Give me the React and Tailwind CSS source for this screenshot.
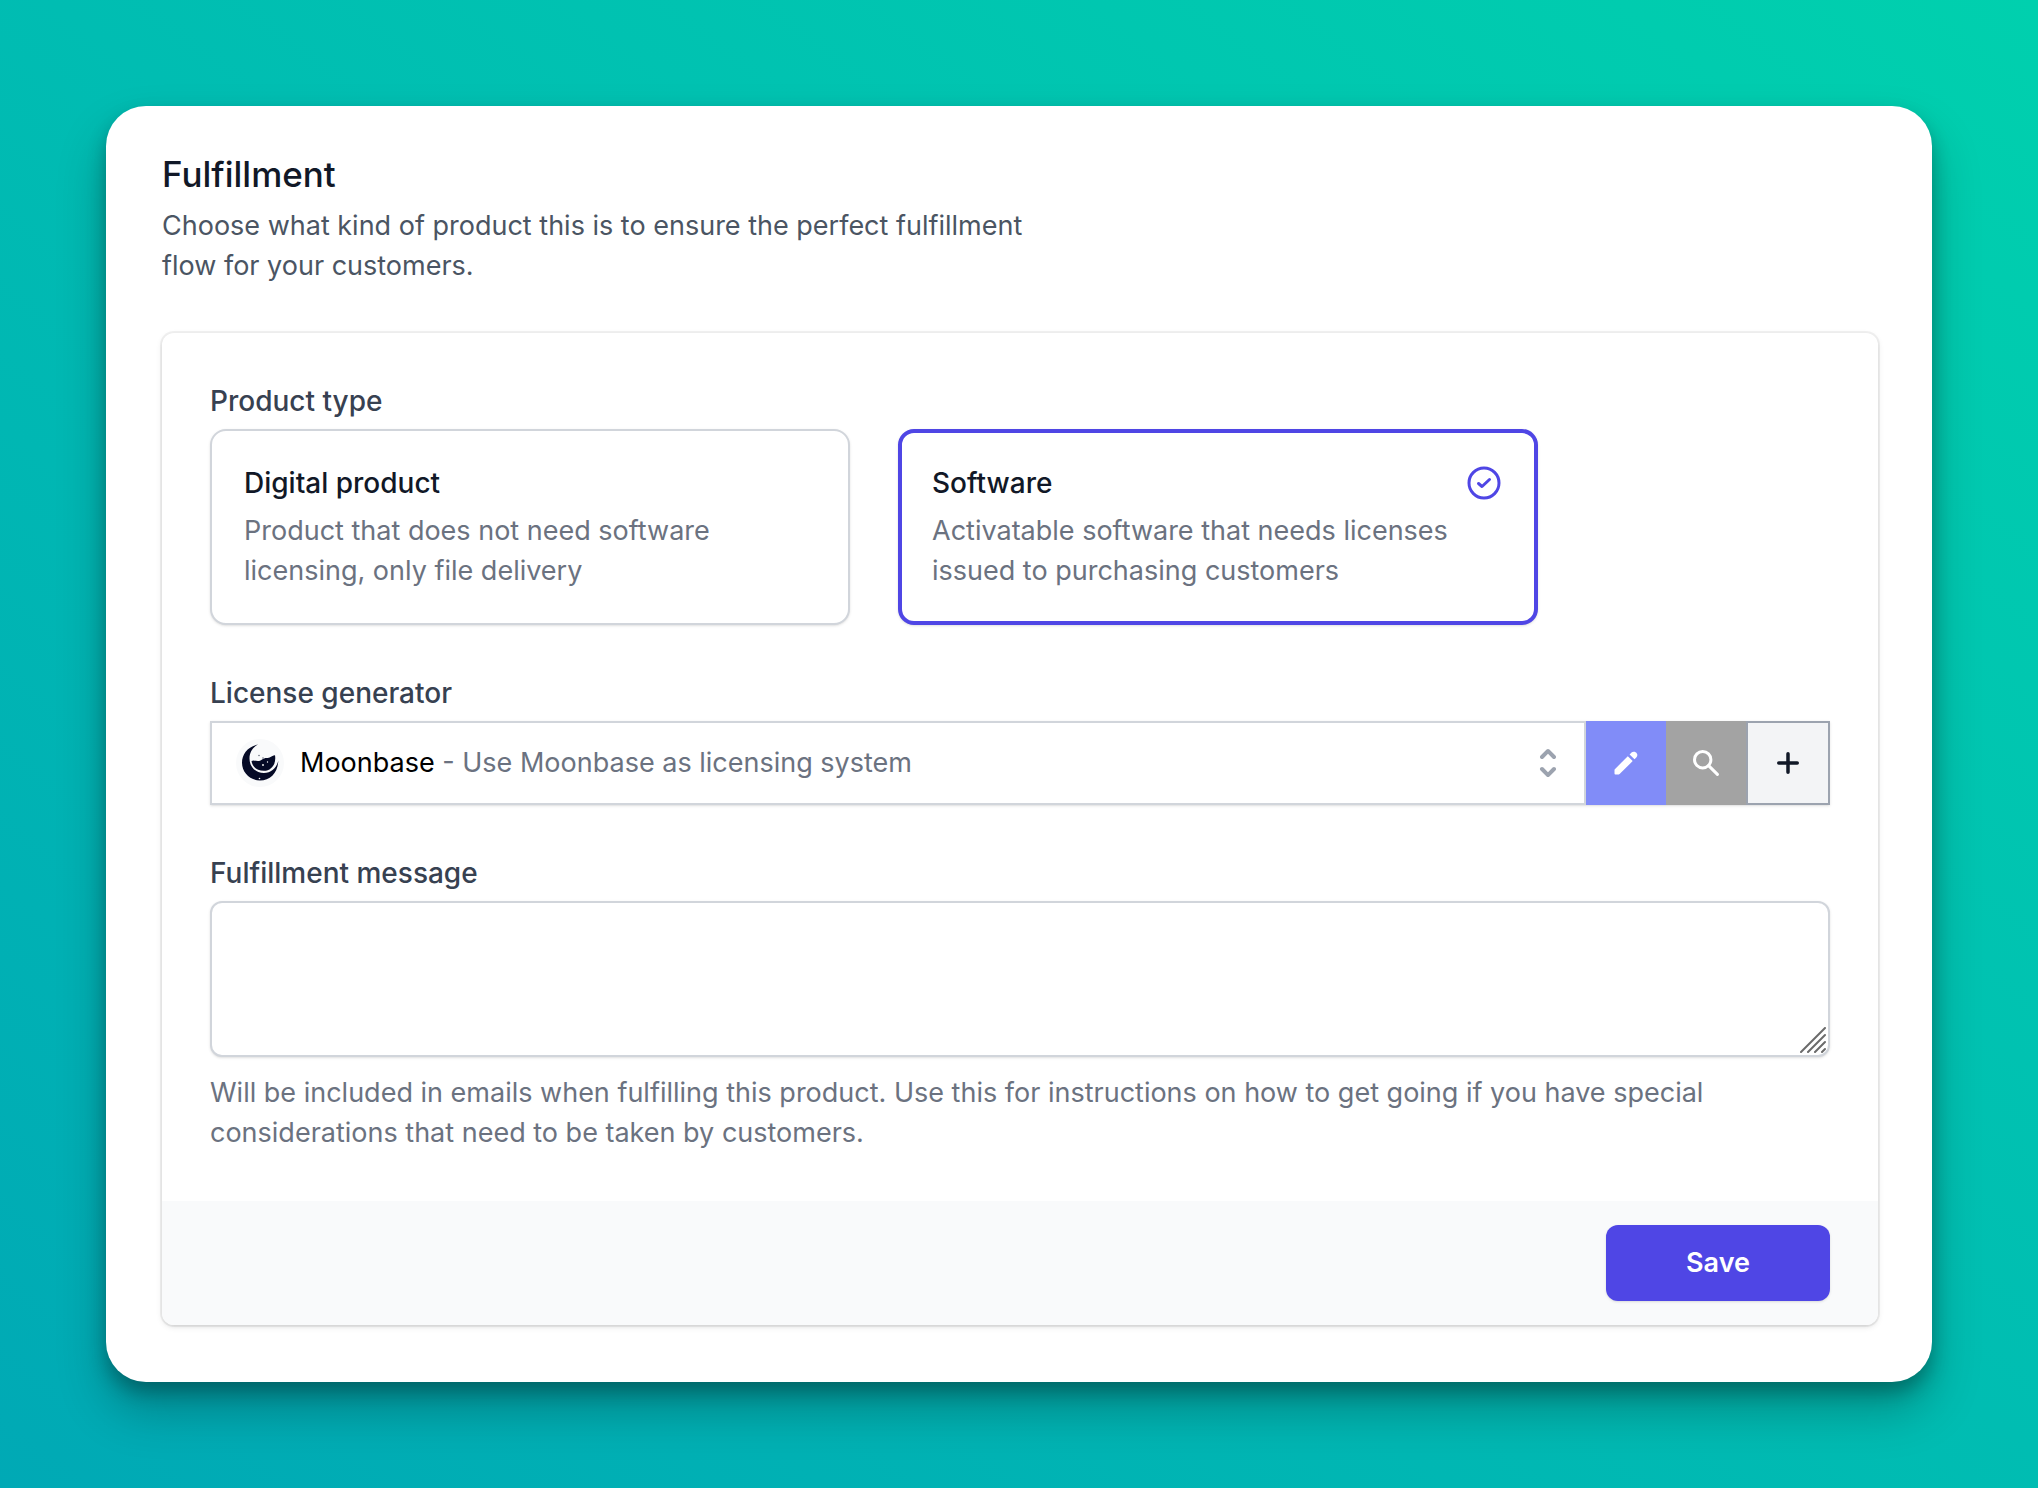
import { useState } from "react";

const TYPES = [
  { id: "digital", title: "Digital product", text: "Product that does not need software licensing, only file delivery" },
  { id: "software", title: "Software", text: "Activatable software that needs licenses issued to purchasing customers" },
];

function CheckCircle() {
  return (
    <svg viewBox="0 0 40 40" className="size-10 shrink-0 text-[#4f46e5]" fill="none" stroke="currentColor" strokeWidth="3" strokeLinecap="round" strokeLinejoin="round" aria-hidden="true">
      <circle cx="20" cy="20" r="15" />
      <path d="M14.500 20.500 18 23.500 25.500 16.500" />
    </svg>
  );
}

function MoonLogo() {
  return (
    <svg viewBox="0 0 48 48" className="size-12 shrink-0" aria-hidden="true">
      <circle cx="24" cy="24" r="24" fill="#f9fafb" />
      <path d="M22 5.500C12 7.500 6 15 6 23.800 6 33.500 14 41.500 24 41.500 34 41.500 41.500 34.500 42.300 22 40 29.500 35 34 28 34 19 34 13.500 27.500 13.500 19.500 13.500 13.500 16.500 8.500 22 5.500z" fill="#050a26" />
      <path d="M15.500 22C18 20.500 20 22.500 23 22 26 21.500 27 19 30.500 19 34 19 35 17 39 16.200 40.500 25 35.500 31.800 28 31.800 21 31.800 16.500 28 15.500 22z" fill="#050a26" />
      <circle cx="23" cy="16.500" r="0.800" fill="#6b7280" />
      <circle cx="27" cy="19" r="0.800" fill="#6b7280" />
      <circle cx="27" cy="26" r="0.900" fill="#fff" />
      <circle cx="31.500" cy="23" r="0.700" fill="#fff" />
      <circle cx="23.500" cy="39.500" r="0.800" fill="#fff" />
    </svg>
  );
}

export default function App() {
  const [type, setType] = useState("software");
  return (
    <div className="min-h-screen bg-linear-to-tr from-[#00a9b5] to-[#00d0ae] p-[106px] font-[Inter,sans-serif] text-[27px] leading-10">
      <main className="rounded-[40px] bg-white pt-11 pr-[54px] pb-[57px] pl-14 shadow-[0_28px_48px_rgba(0,0,0,0.25),0_10px_18px_rgba(0,0,0,0.25)]">
        <h1 className="text-[35px] leading-12 font-medium text-[#111827]">Fulfillment</h1>
        <p className="mt-2 max-w-[900px] text-[#4b5563]">
          Choose what kind of product this is to ensure the perfect fulfillment flow for your customers.
        </p>

        <form className="mt-[47px] overflow-hidden rounded-xl bg-white shadow-[0_0_0_2px_rgba(0,0,0,0.05),0_2px_6px_rgba(0,0,0,0.1),0_2px_4px_-2px_rgba(0,0,0,0.1)]" onSubmit={(e) => e.preventDefault()}>
          <div className="flex flex-col gap-12 p-12">
            <fieldset>
              <legend className="text-[28px] font-medium text-[#374151]">Product type</legend>
              <div className="mt-2 grid max-w-[1328px] grid-cols-2 gap-12">
                {TYPES.map((t) => {
                  const on = t.id === type;
                  return (
                    <label
                      key={t.id}
                      className={
                        "flex cursor-pointer items-start rounded-2xl bg-white shadow-sm " +
                        (on ? "border-4 border-[#4f46e5] p-[30px]" : "border-2 border-[#d1d5db] p-8")
                      }
                    >
                      <input type="radio" name="type" className="sr-only" checked={on} onChange={() => setType(t.id)} />
                      <span className="flex-1">
                        <span className="block text-[28px] font-medium text-[#111827]">{t.title}</span>
                        <span className="mt-2 block text-[#6b7280]">{t.text}</span>
                      </span>
                      {on && <CheckCircle />}
                    </label>
                  );
                })}
              </div>
            </fieldset>

            <div>
              <span id="generator" className="block text-[28px] font-medium text-[#374151]">License generator</span>
              <div className="mt-2 flex h-21 shadow-sm">
                <button type="button" aria-haspopup="listbox" aria-labelledby="generator generator-value" className="flex flex-1 items-center border-2 border-[#d1d5db] bg-white pr-4 pl-6 text-left">
                  <MoonLogo />
                  <span id="generator-value" className="ml-4 flex-1 text-[#6b7280]">
                    <span className="text-black">Moonbase</span> - Use Moonbase as licensing system
                  </span>
                  <svg viewBox="0 0 20 20" className="size-10 text-[#9ca3af]" fill="currentColor" aria-hidden="true">
                    <path fillRule="evenodd" clipRule="evenodd" d="M10 3a1 1 0 01.707.293l3 3a1 1 0 01-1.414 1.414L10 5.414 7.707 7.707a1 1 0 01-1.414-1.414l3-3A1 1 0 0110 3zm-3.707 9.293a1 1 0 011.414 0L10 14.586l2.293-2.293a1 1 0 011.414 1.414l-3 3a1 1 0 01-1.414 0l-3-3a1 1 0 010-1.414z" />
                  </svg>
                </button>
                <button type="button" aria-label="Edit" className="flex w-20 items-center justify-center bg-[#818cf8] text-white">
                  <svg viewBox="0 0 24 24" className="size-6" fill="currentColor" aria-hidden="true">
                    <path d="M.6 18.400 13.800 5.200 18.700 10.100 5.600 23.100Q5.200 23.500 4.700 23.500H1.400Q.5 23.500.5 22.600V18.900Q.5 18.600.6 18.400zM15.600 3.500 17.500 1.600Q18.800.3 20.700.8 22.800 1.500 23.300 3.500 23.600 5.200 22.300 6.500L20.500 8.300z" />
                  </svg>
                </button>
                <button type="button" aria-label="Search" className="flex w-20 items-center justify-center bg-[#a3a3a3] text-white">
                  <svg viewBox="0 0 26 26" className="size-[26px]" fill="none" stroke="currentColor" strokeWidth="3" strokeLinecap="round" aria-hidden="true">
                    <circle cx="9.700" cy="9.700" r="8.200" />
                    <path d="M15.600 15.600 24.400 24.400" />
                  </svg>
                </button>
                <button type="button" aria-label="Add" className="flex w-21 items-center justify-center border-2 border-[#9ca3af] bg-[#f3f4f6] text-[#111827]">
                  <svg viewBox="0 0 32 32" className="size-8" fill="none" stroke="currentColor" strokeWidth="3.500" strokeLinecap="round" aria-hidden="true">
                    <path d="M16 6.750v18.500M6.750 16h18.500" />
                  </svg>
                </button>
              </div>
            </div>

            <div>
              <label htmlFor="message" className="block text-[28px] font-medium text-[#374151]">Fulfillment message</label>
              <div className="relative mt-2">
                <textarea id="message" className="block h-39 w-full resize-none rounded-xl border-2 border-[#d1d5db] bg-white px-6 py-4 shadow-sm" />
                <svg viewBox="0 0 26 26" className="pointer-events-none absolute right-1 bottom-1 size-[26px]" stroke="#6b6b6b" strokeWidth="2" strokeLinecap="round" aria-hidden="true">
                  <path d="M1 25 25 1M8 25 25 8M15 25 25 15M22 25 25 22" />
                </svg>
              </div>
              <p className="mt-4 text-[#6b7280]">
                Will be included in emails when fulfilling this product. Use this for instructions on how to get going if you have special considerations that need to be taken by customers.
              </p>
            </div>
          </div>

          <div className="flex justify-end bg-[#f9fafb] px-12 py-6">
            <button type="submit" className="h-19 w-56 rounded-xl bg-[#4f46e5] font-semibold text-white shadow-sm">Save</button>
          </div>
        </form>
      </main>
    </div>
  );
}
